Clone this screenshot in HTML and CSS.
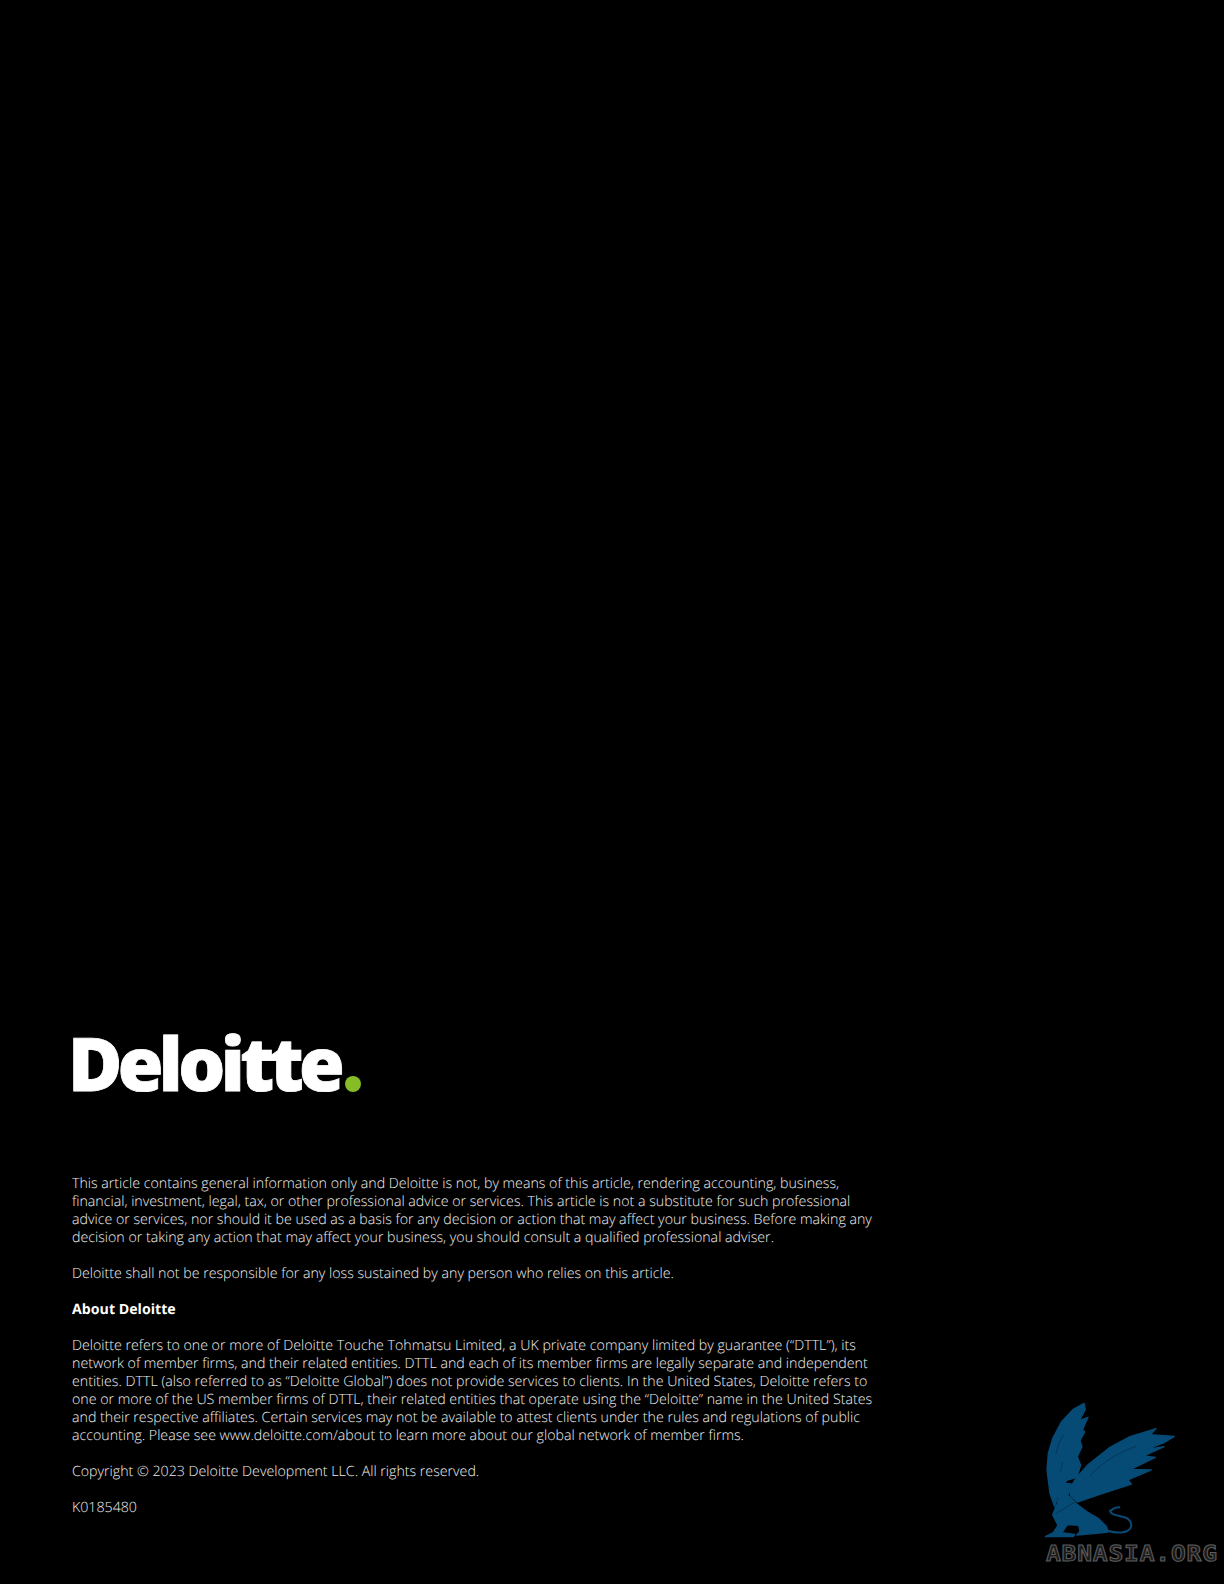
FILE: index.html
```html
<!DOCTYPE html>
<html lang="en">
<head>
<meta charset="utf-8">
<title>Deloitte</title>
<link rel="stylesheet" href="styles.css">
</head>
<body>
<main class="page">
  <div class="logo">Deloitte<span class="dot"></span></div>
  <div class="legal">
    <p>This article contains general information only and Deloitte is not, by means of this article, rendering accounting, business,<br>financial, investment, legal, tax, or other professional advice or services. This article is not a substitute for such professional<br>advice or services, nor should it be used as a basis for any decision or action that may affect your business. Before making any<br>decision or taking any action that may affect your business, you should consult a qualified professional adviser.</p>
    <p>Deloitte shall not be responsible for any loss sustained by any person who relies on this article.</p>
    <p class="strong">About Deloitte</p>
    <p>Deloitte refers to one or more of Deloitte Touche Tohmatsu Limited, a UK private company limited by guarantee (“DTTL”), its<br>network of member firms, and their related entities. DTTL and each of its member firms are legally separate and independent<br>entities. DTTL (also referred to as “Deloitte Global”) does not provide services to clients. In the United States, Deloitte refers to<br>one or more of the US member firms of DTTL, their related entities that operate using the “Deloitte” name in the United States<br>and their respective affiliates. Certain services may not be available to attest clients under the rules and regulations of public<br>accounting. Please see www.deloitte.com/about to learn more about our global network of member firms.</p>
    <p>Copyright © 2023 Deloitte Development LLC. All rights reserved.</p>
    <p>K0185480</p>
  </div>
</main>
<div class="mark">
  <svg class="griffin" viewBox="0 0 582 582" width="194" height="194" aria-hidden="true">
    <path class="g" d="M162 40 L166 58 L148 92 L174 82 L158 118 L164 126 L150 152 L156 170 L142 200 L152 226 L140 262 L112 270 L90 292 L74 350 L60 310 L51 240 L55 190 L68 146 L94 96 L130 58 Z"/>
    <path class="g" d="M140 262 L172 226 L240 172 L300 140 L378 116 L362 134 L433 139 L402 158 L350 178 L402 170 L342 198 L376 202 L302 238 L364 240 L294 270 L304 282 L212 312 L142 336 L124 320 L116 300 Z"/>
    <path class="g" d="M92 271 L110 280 L133 283 L116 296 L114 316 L140 342 L172 366 L206 386 L230 410 L234 426 L200 430 L140 435 L150 424 L146 406 L112 404 L96 428 L134 433 L130 440 L46 440 L70 428 L84 406 L68 374 L82 340 L88 300 Z"/>
    <path class="t" d="M243 362 C250 354 258 352 268 352 M240 362 C244 376 262 376 278 380 C298 384 306 398 303 410 C298 428 268 432 232 422"/>
    <path class="cut" d="M78 190 C82 170 90 150 102 132 M92 244 L98 214 M180 256 C220 216 260 190 320 168 M76 372 L138 334"/>
  </svg>
  <div class="wordmark">ABNASIA.ORG</div>
</div>
</body>
</html>
```
FILE: styles.css
```css
html, body {
  margin: 0;
  background: #000;
}
body {
  width: 1224px;
  height: 1584px;
  position: relative;
  overflow: hidden;
  font-family: "Open Sans", "Liberation Sans", sans-serif;
  text-rendering: geometricPrecision;
}
.page {
  display: flex;
  flex-direction: column;
  padding: 1023px 0 0 72px;
}
.logo {
  display: flex;
  align-items: baseline;
  height: 80px;
  margin-left: -4px;
  font-size: 74px;
  line-height: 80px;
  font-weight: 800;
  letter-spacing: -4.6px;
  -webkit-text-stroke: 0.8px #fff;
  color: #fff;
}
.dot {
  width: 16px;
  height: 16px;
  margin-left: 5px;
  border-radius: 50%;
  background: #86bc25;
  transform: translateY(1px);
}
.legal {
  margin-top: 72px;
  color: #f0f0f0;
  font-size: 14.2px;
  line-height: 18px;
  font-weight: 300;
  white-space: nowrap;
}
.legal p {
  margin: 0 0 18px;
}
.legal .strong {
  font-weight: 700;
  color: #fff;
}
.mark {
  position: absolute;
  left: 1030px;
  top: 1390px;
  width: 194px;
  height: 194px;
}
.griffin {
  display: block;
}
.g {
  fill: #064a76;
  stroke: #064a76;
  stroke-width: 4;
  stroke-linejoin: round;
}
.t {
  fill: none;
  stroke: #064a76;
  stroke-width: 6;
  stroke-linecap: round;
}
.cut {
  fill: none;
  stroke: #043656;
  stroke-width: 3;
}
.wordmark {
  position: absolute;
  left: 16px;
  top: 152px;
  font-family: "DejaVu Sans Mono", monospace;
  font-size: 22px;
  line-height: 26px;
  font-weight: 700;
  letter-spacing: 0.7px;
  color: #1a1a1a;
  -webkit-text-stroke: 1px #5c5c5c;
  transform: scaleX(1.12);
  transform-origin: left center;
}
```
